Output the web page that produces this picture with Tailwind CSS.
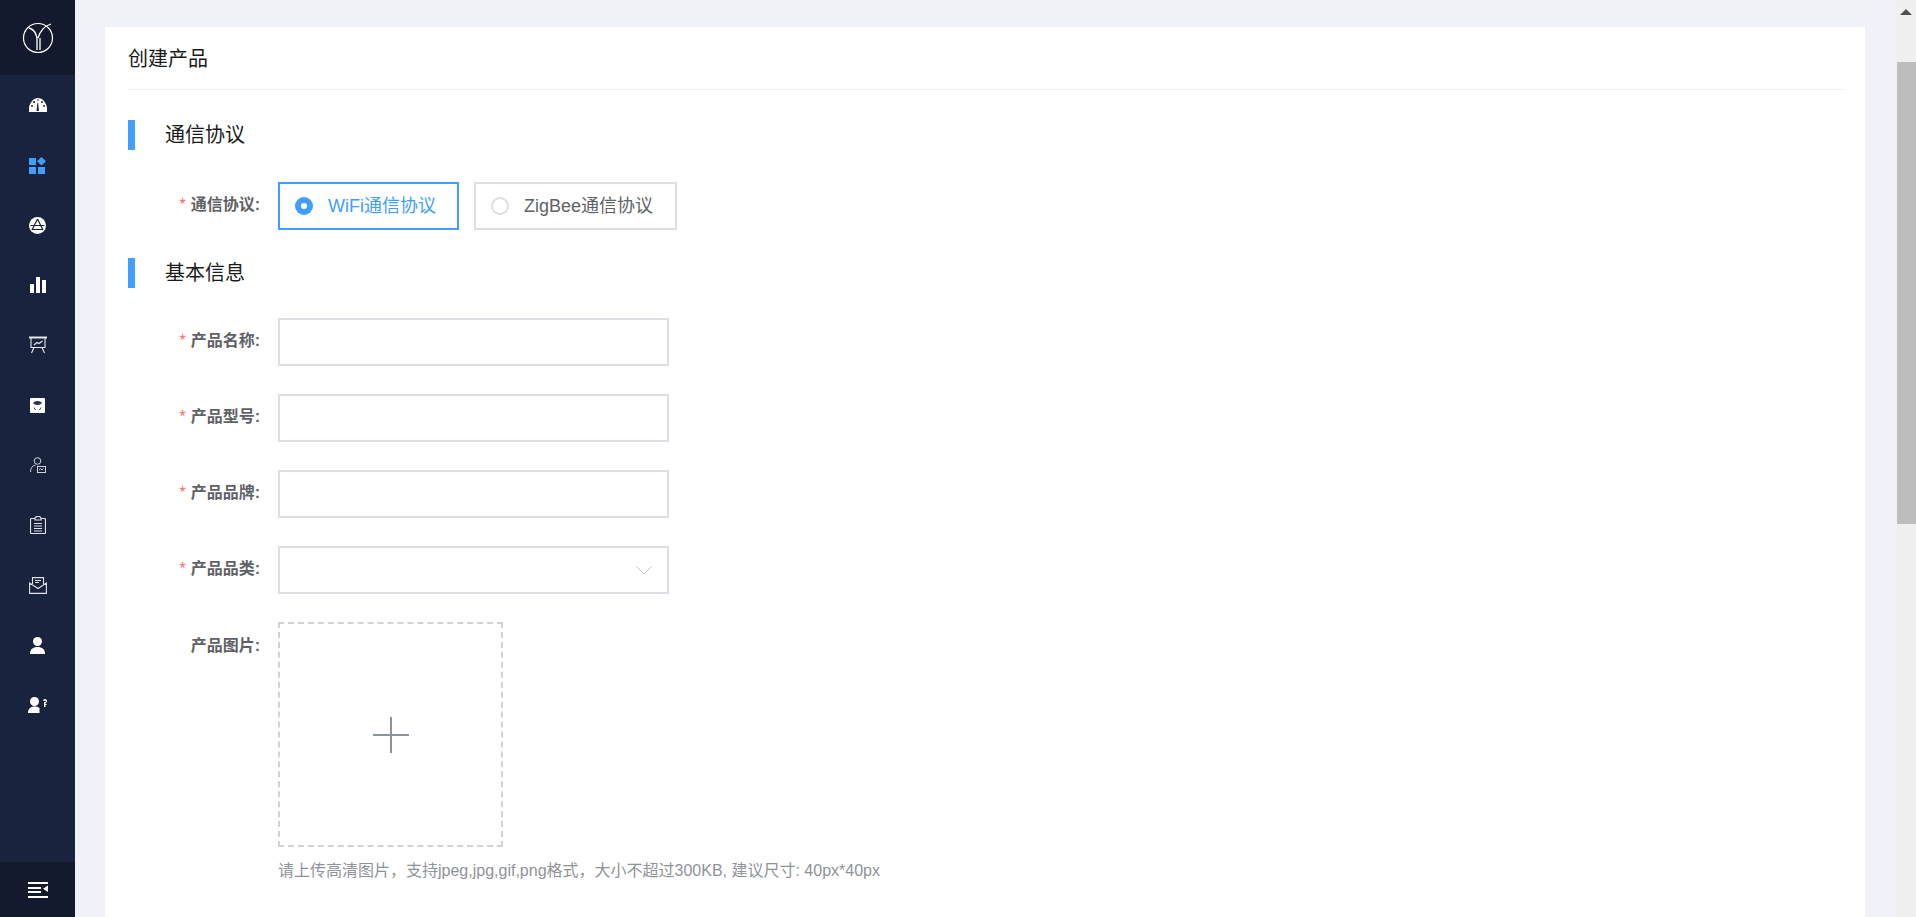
<!DOCTYPE html>
<html lang="en">
<head>
    <meta charset="UTF-8">
    <title>创建产品</title>
    <script src="https://cdn.jsdelivr.net/npm/@tailwindcss/browser@4"></script>
</head>
<body class="bg-[#f0f2f7] font-['Liberation_Sans','Noto_Sans_CJK_SC',sans-serif] overflow-hidden">
    <div class="flex h-[917px]">
        <!-- Sidebar -->
        <aside class="w-[75px] shrink-0 bg-[#19233e] flex flex-col">
            <div class="h-[75px] bg-[#141a2d] flex items-center justify-center">
                <svg class="w-[34px] h-[34px]" viewBox="0 0 34 34" fill="none" stroke="#fff">
                    <circle cx="17" cy="17" r="14.5" stroke-width="1.2"/>
                    <path d="M8 7c4 1 7 5 8 10v12M30 3c-6 2-11 7-13 14M19 17v12" stroke-width="1.3"/>
                </svg>
            </div>
            <nav class="flex flex-col pt-[-1px]">
                <div class="h-[60px] flex items-center justify-center">
                    <svg class="w-[18px] h-[15px]" viewBox="0 0 18 15" fill="#fff"><path d="M0 14C-1 6 4 0 9 0s10 6 9 14zM8.4 5l-.9 8h2.4l-.7-8z"/><g fill="#19233e"><circle cx="3" cy="8" r="1"/><circle cx="5" cy="4" r="1"/><circle cx="13" cy="4" r="1"/><circle cx="15" cy="8" r="1"/><circle cx="9" cy="2" r=".8"/></g></svg>
                </div>
                <div class="h-[60px] flex items-center justify-center">
                    <svg class="w-[17px] h-[17px]" viewBox="0 0 17 17" fill="#409eff"><rect x="0" y="1" width="7" height="7"/><rect x="0" y="10" width="7" height="7"/><rect x="9" y="10" width="7" height="7"/><path d="M12.5 0l4.5 4.3-4.5 4.3L8 4.3z"/></svg>
                </div>
                <div class="h-[60px] flex items-center justify-center">
                    <svg class="w-[17px] h-[17px]" viewBox="0 0 17 17"><circle cx="8.5" cy="8.5" r="8.5" fill="#fff"/><path d="M8.5 2L3 13M8.5 2l5.500 11M1.500 8.500l14 0M3.500 12.500h10" stroke="#19233e" stroke-width="1.200" fill="none"/></svg>
                </div>
                <div class="h-[60px] flex items-center justify-center">
                    <svg class="w-[16px] h-[16px]" viewBox="0 0 16 16" fill="#fff"><rect x="0" y="7" width="4" height="9"/><rect x="6" y="0" width="4" height="16"/><rect x="12" y="3" width="4" height="13"/></svg>
                </div>
                <div class="h-[60px] flex items-center justify-center">
                    <svg class="w-[18px] h-[18px]" viewBox="0 0 18 18" fill="none" stroke="#e4e7ee" stroke-width="1.100"><path d="M0 1.500h18" stroke-width="2"/><path d="M2 2v9.500h14V2M5 11.500L2.500 17M13 11.500L15.500 17M5 9l3-2.500 2 1L13.500 5"/></svg>
                </div>
                <div class="h-[60px] flex items-center justify-center">
                    <svg class="w-[15px] h-[15px]" viewBox="0 0 15 15"><rect width="15" height="15" rx="1" fill="#fff"/><path d="M3.500 5L5.500 3.500v3zM11.500 5L9.500 3.500v3zM6.500 3.500h2v3h-2zM4 9.500l1.500 2.500M11 9.500l-1.500 2.500" fill="#19233e" stroke="#19233e" stroke-width=".8"/></svg>
                </div>
                <div class="h-[60px] flex items-center justify-center">
                    <svg class="w-[16px] h-[16px]" viewBox="0 0 16 16" fill="none" stroke="#cfd3dc" stroke-width="1"><circle cx="7.500" cy="4" r="3.300"/><path d="M.5 15c0-4 1.500-6 5-7"/><rect x="7.500" y="9.500" width="8" height="6"/><path d="M9 13l1.500-1.200 1.500 1 1.500-1.300"/></svg>
                </div>
                <div class="h-[60px] flex items-center justify-center">
                    <svg class="w-[16px] h-[18px]" viewBox="0 0 16 18" fill="none" stroke="#dfe2e9" stroke-width="1.200"><path d="M5 2.500H1.500a1 1 0 0 0-1 1v13a1 1 0 0 0 1 1h13a1 1 0 0 0 1-1v-13a1 1 0 0 0-1-1H11"/><path d="M5 4V2.500a3 2 0 0 1 6 0V4z"/><path d="M4 7.500h8M4 10h8M4 12.500h8M4 15h8"/></svg>
                </div>
                <div class="h-[60px] flex items-center justify-center">
                    <svg class="w-[18px] h-[17px]" viewBox="0 0 18 17" fill="none" stroke="#dfe2e9" stroke-width="1.100"><path d="M3.500 7V.6h11V7M.6 6v10.400h16.800V6L9 11.500z"/><path d="M6 3.500h6M6 5.500h4"/></svg>
                </div>
                <div class="h-[60px] flex items-center justify-center">
                    <svg class="w-[15px] h-[17px]" viewBox="0 0 15 17" fill="#fff"><circle cx="7.500" cy="4.500" r="4.500"/><path d="M0 17c0-5 3-7 7.500-7S15 12 15 17z"/></svg>
                </div>
                <div class="h-[60px] flex items-center justify-center">
                    <svg class="w-[19px] h-[17px]" viewBox="0 0 19 17" fill="#fff"><circle cx="6.500" cy="4.500" r="4.500"/><path d="M0 16c0-4 2.500-6.500 6.500-6.500 2 0 3.500.5 5 1.500v5z"/><path d="M15 4a2 2 0 1 1 2.500 2v1h1v1h-1v2h-1.500V5h1a.8.8 0 1 0-.8-1z"/></svg>
                </div>
            </nav>
            <div class="mt-auto h-[55px] bg-[#141a2d] flex items-center justify-center">
                <svg class="w-[20px] h-[16px] ml-[1px]" viewBox="0 0 20 16" fill="#fff"><rect y="0" width="20" height="2"/><rect y="5" width="13" height="2"/><rect y="9" width="13" height="2"/><rect y="14" width="20" height="2"/><path d="M20 3.500v6.500l-5-3.200z"/></svg>
            </div>
        </aside>

        <!-- Content -->
        <main class="flex-1 pl-[30px] pr-[30px] pt-[27px]">
            <div class="bg-white h-[900px] pl-[23px] pr-[22px]">
                <div class="h-[63px] border-b border-[#ebeef5] text-[20px] text-[#1a1a1a] flex items-center pt-[2px]">创建产品</div>

                <div class="flex items-center h-[30px] mt-[30px] border-l-[7px] border-[#409eff] pl-[30px] text-[20px] text-[#1a1a1a]">通信协议</div>

                <div class="flex items-center mt-[32px]">
                    <label class="w-[150px] pr-[18px] flex justify-end items-center text-[16px] font-bold text-[#5f6166] -mt-[3px]"><span class="text-[#f56c6c] font-normal mr-[5px]">*</span>通信协议:</label>
                    <div class="h-[48px] w-[181px] border-2 border-[#409eff] flex items-center pl-[15px] text-[18px] text-[#409eff]">
                        <span class="w-[18px] h-[18px] rounded-full bg-[#409eff] flex items-center justify-center mr-[15px]"><span class="w-[6px] h-[6px] rounded-full bg-white"></span></span>WiFi通信协议
                    </div>
                    <div class="h-[48px] w-[203px] ml-[15px] border-2 border-[#dcdfe6] flex items-center pl-[15px] text-[18px] text-[#606266]">
                        <span class="w-[18px] h-[18px] rounded-full border-2 border-[#dcdfe6] mr-[15px]"></span>ZigBee通信协议
                    </div>
                </div>

                <div class="flex items-center h-[30px] mt-[28px] border-l-[7px] border-[#409eff] pl-[30px] text-[20px] text-[#1a1a1a]">基本信息</div>

                <div class="flex items-center mt-[30px]">
                    <label class="w-[150px] pr-[18px] flex justify-end items-center text-[16px] font-bold text-[#5f6166] -mt-[3px]"><span class="text-[#f56c6c] font-normal mr-[5px]">*</span>产品名称:</label>
                    <div class="h-[48px] w-[391px] border-2 border-[#dcdfe6]"></div>
                </div>
                <div class="flex items-center mt-[28px]">
                    <label class="w-[150px] pr-[18px] flex justify-end items-center text-[16px] font-bold text-[#5f6166] -mt-[3px]"><span class="text-[#f56c6c] font-normal mr-[5px]">*</span>产品型号:</label>
                    <div class="h-[48px] w-[391px] border-2 border-[#dcdfe6]"></div>
                </div>
                <div class="flex items-center mt-[28px]">
                    <label class="w-[150px] pr-[18px] flex justify-end items-center text-[16px] font-bold text-[#5f6166] -mt-[3px]"><span class="text-[#f56c6c] font-normal mr-[5px]">*</span>产品品牌:</label>
                    <div class="h-[48px] w-[391px] border-2 border-[#dcdfe6]"></div>
                </div>
                <div class="flex items-center mt-[28px]">
                    <label class="w-[150px] pr-[18px] flex justify-end items-center text-[16px] font-bold text-[#5f6166] -mt-[3px]"><span class="text-[#f56c6c] font-normal mr-[5px]">*</span>产品品类:</label>
                    <div class="h-[48px] w-[391px] border-2 border-[#dcdfe6] flex items-center justify-end pr-[15px]">
                        <svg class="w-[16px] h-[9px]" viewBox="0 0 16 9" fill="none" stroke="#c0c4cc" stroke-width="1"><path d="M.5.5L8 8l7.500-7.500"/></svg>
                    </div>
                </div>

                <div class="flex mt-[28px]">
                    <label class="w-[150px] pr-[18px] pt-[12px] flex justify-end text-[16px] font-bold text-[#5f6166] h-[40px]">产品图片:</label>
                    <div>
                        <div class="w-[225px] h-[225px] border-2 border-dashed border-[#d3d3d3] flex items-center justify-center">
                            <svg class="w-[36px] h-[36px]" viewBox="0 0 36 36" stroke="#8c939d" stroke-width="2"><path d="M18 0v36M0 18h36"/></svg>
                        </div>
                        <p class="mt-[12px] text-[16px] leading-[24px] text-[#909399]">请上传高清图片，支持jpeg,jpg,gif,png格式，大小不超过300KB, 建议尺寸: 40px*40px</p>
                    </div>
                </div>
            </div>
        </main>

        <!-- Scrollbar -->
        <div class="w-[21px] shrink-0 bg-[#f0f0f0] flex flex-col items-end">
            <div class="h-[62px] w-full flex justify-center pt-[9px] pl-[1px]">
                <div class="w-0 h-0 border-l-[6px] border-r-[6px] border-b-[6px] border-l-transparent border-r-transparent border-b-[#505050]"></div>
            </div>
            <div class="w-[19px] h-[462px] bg-[#bdbdbd]"></div>
        </div>
    </div>
</body>
</html>
